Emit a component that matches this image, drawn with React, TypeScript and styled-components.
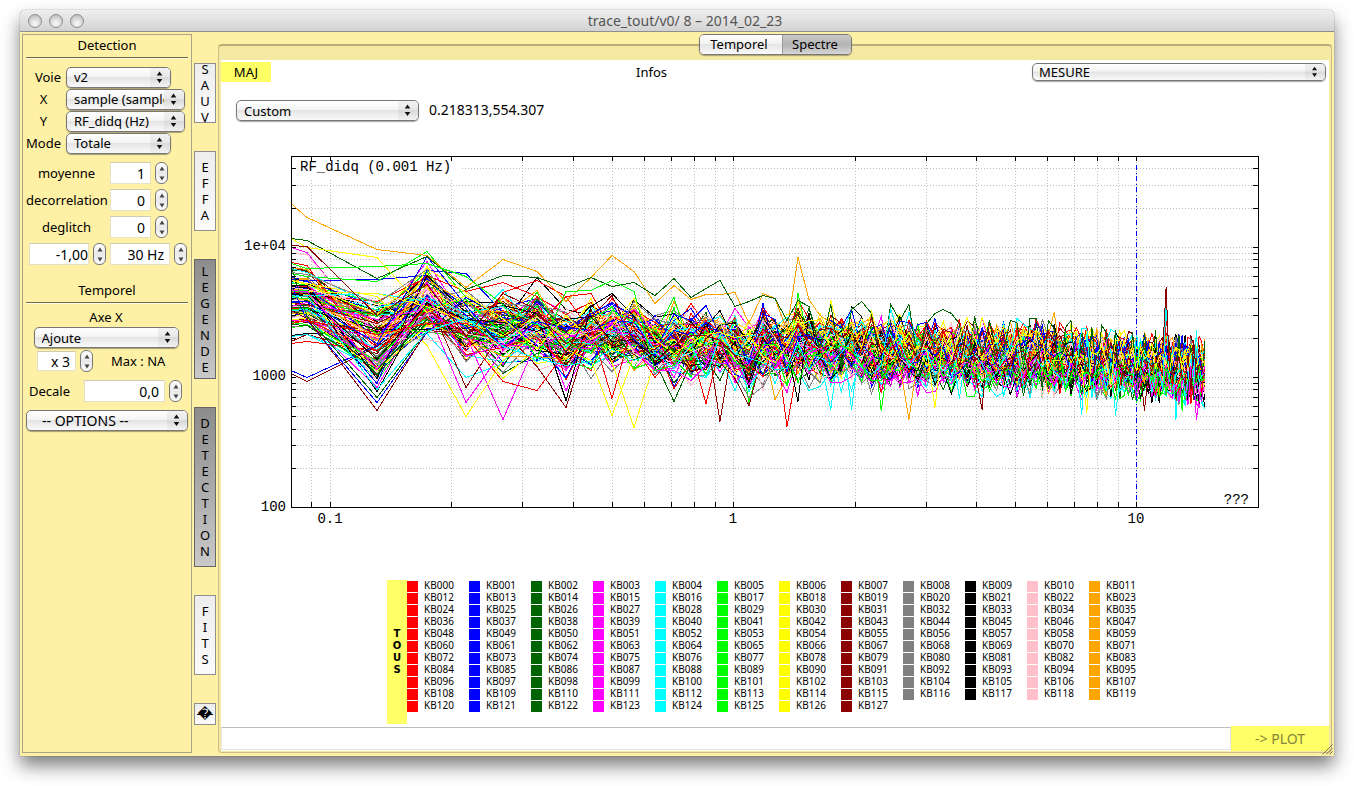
import React from "react";
import styled, { createGlobalStyle, css } from "styled-components";

const GlobalStyle = createGlobalStyle`
  * { box-sizing: border-box; }
  body {
    margin: 0;
    background: #fff;
    color: #000;
    font: 13px/16px "Lucida Grande", "Noto Sans", sans-serif;
  }
  button, input, select { font: inherit; color: inherit; margin: 0; }
`;

/* ---------- window ---------- */

const Desktop = styled.div`
  display: flex;
  min-height: 100vh;
  padding: 10px 20px 30px;
`;

const Window = styled.div`
  flex: 1;
  min-width: 0;
  display: flex;
  flex-direction: column;
  border-radius: 5px 5px 0 0;
  background: #fef0a5;
  box-shadow: 0 0 1px rgba(0, 0, 0, 0.7), 0 10px 18px rgba(0, 0, 0, 0.5);
`;

const TitleBar = styled.header`
  display: flex;
  align-items: center;
  height: 22px;
  padding: 0 48px 0 8px;
  border-bottom: 1px solid #8f8f8f;
  border-radius: 5px 5px 0 0;
  background: linear-gradient(#efefef, #d2d2d2);
`;

const Lights = styled.div`
  display: flex;
  gap: 7px;
`;

const Light = styled.button`
  width: 14px;
  height: 14px;
  padding: 0;
  border: 1px solid #8d8d8d;
  border-radius: 50%;
  background: radial-gradient(circle at 50% 70%, #f2f2f2 15%, #c4c4c4 75%);
`;

const Title = styled.h1`
  flex: 1;
  margin: 0;
  color: #555;
  font-size: 14px;
  font-weight: 400;
  text-align: center;
`;

const Body = styled.div`
  flex: 1;
  display: flex;
  padding: 2px 2px 3px;
`;

/* ---------- shared controls ---------- */

const SelectBox = styled.span<{ $w?: string; $h?: number }>`
  display: grid;
  grid-template-columns: minmax(0, 1fr) 20px;
  align-items: stretch;
  width: ${(p) => p.$w ?? "auto"};
  height: ${(p) => p.$h ?? 21}px;
  border: 1px solid #777;
  border-radius: 5px;
  background: linear-gradient(#fff, #f4f4f4 45%, #e4e4e4 50%, #fafafa);
  box-shadow: 0 1px 1px rgba(0, 0, 0, 0.35);
`;

const NativeSelect = styled.select<{ $indent: number; $large?: boolean }>`
  grid-area: 1 / 1 / 2 / 3;
  appearance: none;
  min-width: 0;
  padding: 0 20px 0 ${(p) => p.$indent}px;
  border: 0;
  background: transparent;
  font-size: ${(p) => (p.$large ? 14 : 13)}px;
  line-height: 16px;
`;

const SelectArrows = styled.svg`
  grid-area: 1 / 2;
  width: 20px;
  height: 100%;
  pointer-events: none;
  border-radius: 0 4px 4px 0;
  background: linear-gradient(#f2f2f2, #e8e8e8 45%, #d9d9d9 50%, #f2f2f2);
`;

function Dropdown(props: { label?: string; id?: string; value: string; w?: string; h?: number; indent?: number; large?: boolean }) {
  return (
    <SelectBox $w={props.w} $h={props.h}>
      <NativeSelect
        id={props.id}
        aria-label={props.label}
        $indent={props.indent ?? 7}
        $large={props.large}
        defaultValue={props.value}
      >
        <option>{props.value}</option>
      </NativeSelect>
      <SelectArrows viewBox="0 0 20 18" aria-hidden>
        <path d="M9.5 3 L12.3 7 H6.7 Z M9.5 14.5 L12.3 10.5 H6.7 Z" fill="#111" />
      </SelectArrows>
    </SelectBox>
  );
}

const SpinRow = styled.span`
  display: flex;
  align-items: center;
  gap: 4px;
`;

const SpinInput = styled.input<{ $w: number; $h?: number; $pad?: number }>`
  width: ${(p) => p.$w}px;
  height: ${(p) => p.$h ?? 22}px;
  padding: 1px ${(p) => p.$pad ?? 5}px 0 0;
  border: 1px solid #e6e0c4;
  border-top-color: #cfcab0;
  background: #fff;
  font-size: 14px;
  text-align: right;
`;

const Stepper = styled.span`
  display: flex;
  flex-direction: column;
  width: 13px;
  height: 22px;
  overflow: hidden;
  border: 1px solid #777;
  border-radius: 6px;
  background: linear-gradient(#fff, #e9e9e9 50%, #fafafa);
`;

const StepButton = styled.button`
  flex: 1;
  display: flex;
  align-items: center;
  justify-content: center;
  padding: 0;
  border: 0;
  background: transparent;
`;

function Spin(props: { label?: string; id?: string; value: string; w: number; h?: number; pad?: number }) {
  return (
    <SpinRow>
      <SpinInput id={props.id} aria-label={props.label} defaultValue={props.value} $w={props.w} $h={props.h} $pad={props.pad} />
      <Stepper>
        <StepButton aria-label="plus">
          <svg width="6" height="5" viewBox="0 0 6 5"><path d="M3 0.5 L5.5 4.5 H0.5 Z" fill="#444" /></svg>
        </StepButton>
        <StepButton aria-label="moins">
          <svg width="6" height="5" viewBox="0 0 6 5"><path d="M3 4.5 L5.5 0.5 H0.5 Z" fill="#444" /></svg>
        </StepButton>
      </Stepper>
    </SpinRow>
  );
}

/* ---------- left panel ---------- */

const Sidebar = styled.aside`
  width: 170px;
  flex: none;
  padding: 3px;
  border: 1px solid #aaa588;
`;

const Heading = styled.h2`
  height: 20px;
  margin: 0;
  border-bottom: 1px solid #6f6a4c;
  box-shadow: 0 1px 0 #fffbe0;
  font-size: 13px;
  font-weight: 400;
  line-height: 14px;
  text-align: center;
`;

const ChannelForm = styled.div`
  display: grid;
  grid-template-columns: 35px 119px;
  grid-auto-rows: 22px;
  column-gap: 5px;
  align-items: center;
  padding-top: 8px;
`;

const Label = styled.label<{ $align?: string }>`
  text-align: ${(p) => p.$align ?? "center"};
  white-space: nowrap;
`;

const FilterForm = styled.div`
  display: grid;
  grid-template-columns: 81px 60px;
  grid-auto-rows: 22px;
  gap: 5px 3px;
  align-items: center;
  padding-top: 8px;
`;

const BandRow = styled.div`
  display: flex;
  gap: 4px;
  padding: 5px 0 18px 3px;
`;

const AxisBlock = styled.div`
  display: flex;
  flex-direction: column;
  align-items: center;
  padding: 6px 2px 0 0;
`;

const AxisTitle = styled.span`
  height: 18px;
  line-height: 16px;
`;

const ScaleRow = styled.div`
  display: flex;
  align-items: center;
  gap: 18px;
  padding: 2px 0 8px 11px;
`;

const OffsetRow = styled.div`
  display: flex;
  align-items: center;
  gap: 14px;
  padding: 0 0 8px 3px;
`;

function LeftPanel() {
  return (
    <Sidebar>
      <Heading>Detection</Heading>
      <ChannelForm>
        <Label htmlFor="voie" $align="right">Voie</Label>
        <Dropdown id="voie" value="v2" w="105px" />
        <Label htmlFor="axe-x">X</Label>
        <Dropdown id="axe-x" value="sample (sample)" />
        <Label htmlFor="axe-y">Y</Label>
        <Dropdown id="axe-y" value="RF_didq (Hz)" />
        <Label htmlFor="mode">Mode</Label>
        <Dropdown id="mode" value="Totale" w="105px" />
      </ChannelForm>
      <FilterForm>
        <Label htmlFor="moyenne">moyenne</Label>
        <Spin id="moyenne" value="1" w={41} />
        <Label htmlFor="decorrelation">decorrelation</Label>
        <Spin id="decorrelation" value="0" w={41} />
        <Label htmlFor="deglitch">deglitch</Label>
        <Spin id="deglitch" value="0" w={41} />
      </FilterForm>
      <BandRow>
        <Spin label="Fréquence basse" value="-1,00" w={60} pad={0} />
        <Spin label="Fréquence haute" value="30 Hz" w={60} />
      </BandRow>
      <Heading>Temporel</Heading>
      <AxisBlock>
        <AxisTitle>Axe X</AxisTitle>
        <Dropdown label="Axe X" value="Ajoute" w="145px" />
      </AxisBlock>
      <ScaleRow>
        <Spin label="Echelle" value="x 3" w={39} h={20} />
        <span>Max : NA</span>
      </ScaleRow>
      <OffsetRow>
        <Label htmlFor="decale">Decale</Label>
        <Spin id="decale" value="0,0" w={81} />
      </OffsetRow>
      <Dropdown label="Options" value="-- OPTIONS --" indent={15} large />
    </Sidebar>
  );
}

/* ---------- vertical tool strip ---------- */

const Strip = styled.nav`
  display: flex;
  flex-direction: column;
  gap: 28px;
  flex: none;
  width: 26px;
  padding: 29px 2px 0;
`;

const StripButton = styled.button<{ $h: number; $on?: boolean }>`
  display: flex;
  flex-direction: column;
  align-items: center;
  justify-content: center;
  flex: none;
  width: 22px;
  height: ${(p) => p.$h}px;
  padding: 0;
  overflow: hidden;
  border: 1px solid #8f8f8f;
  background: linear-gradient(#ededed, #fbfbfb);
  line-height: 16px;
  ${(p) =>
    p.$on &&
    css`
      border-color: #666;
      background: linear-gradient(#8c8c8c, #c9c9c9);
    `}
`;

const Replacement = styled.span`
  width: 16px;
  background: linear-gradient(#000, #000) center 8px / 16px 1px no-repeat;
  font-family: "DejaVu Sans", sans-serif;
  font-size: 14px;
  line-height: 16px;
`;

const TOOLS = [
  { name: "SAUV", h: 60, on: false },
  { name: "EFFA", h: 80, on: false },
  { name: "LEGENDE", h: 120, on: true },
  { name: "DETECTION", h: 160, on: true },
  { name: "FITS", h: 80, on: false },
];

function Letters({ text }: { text: string }) {
  return (
    <>
      {text.split("").map((c, i) => (
        <span key={i}>{c}</span>
      ))}
    </>
  );
}

function ToolStrip() {
  return (
    <Strip>
      {TOOLS.map((t) => (
        <StripButton key={t.name} $h={t.h} $on={t.on} aria-label={t.name}>
          <Letters text={t.name} />
        </StripButton>
      ))}
      <StripButton $h={22} aria-label="Aide">
        <Replacement>{"\uFFFD"}</Replacement>
      </StripButton>
    </Strip>
  );
}

/* ---------- spectrum ---------- */

const COLORS = ["#ff0000", "#0000ff", "#006400", "#ff00ff", "#00ffff", "#00ff00", "#ffff00", "#8b0000", "#808080", "#000000", "#ffc0cb", "#ffa500"];

const CHANNELS = 128;

/* plot frame inside the drawing */
const LEFT = 70;
const RIGHT = 1037;
const TOP = 16;
const BOTTOM = 367;

const xOf = (f: number) => LEFT + ((Math.log10(f) - Math.log10(0.08)) / Math.log10(20 / 0.08)) * (RIGHT - LEFT);
const yOf = (v: number) => BOTTOM - ((Math.log10(v) - 2) / (Math.log10(5e4) - 2)) * (BOTTOM - TOP);

/* positions of the smoothed frequency bins, closer together as they go up */
const BINS = [70, 86, 156, 206, 245, 282, 316, 345, 370, 391, 413, 434, 453, 470, 485, 499, 514, 528, 542, 554, 566, 577, 588];
while (BINS[BINS.length - 1] < 980) {
  const x = BINS[BINS.length - 1];
  BINS.push(x + 2.5 + (8.5 * (984 - x)) / 396);
}
BINS.push(984);

/* upper and lower limits of the bundle: x, top, bottom */
const BAND = [
  [70, 112, 204], [86, 116, 200], [156, 132, 258], [206, 116, 210], [245, 142, 232], [282, 146, 234], [316, 138, 230],
  [345, 160, 240], [370, 154, 236], [391, 148, 232], [413, 152, 234], [434, 170, 240], [453, 160, 244], [470, 164, 246],
  [485, 162, 240], [499, 168, 238], [514, 166, 246], [528, 178, 258], [542, 162, 246], [554, 172, 240], [566, 176, 248],
  [577, 162, 244], [600, 170, 248], [630, 170, 248], [680, 178, 252], [740, 180, 252], [820, 182, 254], [880, 192, 256],
  [940, 196, 259], [984, 200, 265],
];

function bandAt(x: number) {
  let i = 1;
  while (i < BAND.length - 1 && BAND[i][0] < x) i++;
  const [x0, t0, b0] = BAND[i - 1];
  const [x1, t1, b1] = BAND[i];
  const r = Math.min(1, Math.max(0, (x - x0) / (x1 - x0)));
  return { mid: (t0 + b0 + (t1 + b1 - t0 - b0) * r) / 2, half: (b0 - t0 + (b1 - t1 - b0 + t0) * r) / 2 };
}

/* vertical tendency of each colour inside the bundle, growing to the right */
const TENDENCY = [-0.15, 0, 0.15, 0.2, 0.05, 0.25, -0.2, -0.25, 0, 0.2, -0.1, -0.25];

/* channels that leave the bundle: [channel, x, y, x, y, ...] */
const PEAKS: number[][] = [
  [119, 70, 63, 86, 77, 156, 109, 206, 115, 245, 147, 282, 119, 316, 131, 345, 161, 370, 137, 391, 115, 413, 131, 434, 163, 453, 145, 470, 159, 485, 154, 499, 154, 514, 152, 528, 183, 542, 153, 554, 158, 566, 190, 577, 117, 588, 159, 598, 175, 609, 182],
  [122, 70, 98, 86, 100, 156, 138, 206, 116, 245, 149, 282, 135, 316, 137, 345, 147, 370, 137, 391, 146, 413, 142, 434, 155, 453, 138, 470, 157, 485, 148, 499, 140, 514, 166, 528, 161, 542, 155, 554, 158, 566, 180, 577, 160, 588, 166, 609, 164, 629, 169, 639, 161, 651, 173, 665, 164, 675, 180, 689, 164, 704, 183, 711, 173, 719, 184, 726, 169, 734, 173, 740, 183, 750, 184, 757, 176, 770, 180, 787, 180, 799, 182, 809, 178, 817, 178, 825, 180, 834, 188, 847, 187, 852, 180, 859, 190, 869, 187, 879, 185, 887, 192, 896, 190, 910, 192, 924, 193, 936, 190, 949, 205, 959, 195, 970, 205, 983, 201],
  [126, 70, 98, 86, 107, 156, 117, 206, 172],
  [125, 70, 123, 86, 128, 156, 126, 206, 123, 245, 136, 282, 164],
  [127, 70, 105, 86, 106, 156, 175],
  [121, 206, 116, 245, 165],
  [73, 206, 130, 245, 133, 282, 172],
  [97, 70, 230, 86, 237, 156, 205],
  [103, 70, 233, 86, 241, 156, 206],
  [115, 70, 170, 86, 178, 156, 270, 206, 190],
  [109, 86, 180, 156, 262, 206, 192],
  [98, 86, 176, 156, 257],
  [93, 156, 251],
  [125, 345, 151, 370, 150, 391, 140, 413, 151], [60, 345, 156, 370, 153], [96, 282, 152, 316, 140, 345, 156],
  [102, 206, 205, 245, 276, 282, 220],
  [114, 391, 275, 370, 220, 413, 215], [90, 413, 287, 391, 222, 434, 220],
  [111, 245, 262, 282, 210], [99, 245, 195, 282, 279, 316, 200], [91, 245, 247],
  [108, 282, 241, 316, 250], [105, 345, 260], [91, 345, 267], [87, 345, 250],
  [120, 391, 258], [74, 453, 261], [96, 485, 263], [79, 499, 281], [84, 566, 286], [117, 577, 261], [67, 528, 265],
  [107, 554, 259], [107, 690, 279], [88, 609, 269], [100, 629, 269], [89, 656, 270], [103, 764, 269],
  [77, 577, 153], [66, 577, 160], [78, 609, 160], [70, 609, 163], [124, 665, 168], [112, 689, 172], [95, 833, 172],
  [124, 860, 188, 868, 188, 914, 192, 976, 190], [112, 955, 279, 862, 274, 896, 275, 742, 258, 784, 256],
  [123, 976, 279], [126, 712, 267, 866, 272], [101, 962, 270], [91, 924, 270],
  [127, 945, 147], [124, 945, 158], [120, 945, 175], [119, 945, 195],
];

function buildTraces() {
  let seed = 20140223;
  const rand = () => {
    seed = (seed * 1664525 + 1013904223) % 4294967296;
    return seed / 4294967296;
  };
  const gauss = () => (rand() + rand() + rand() + rand() - 2) * 1.1;
  const traces: number[][] = [];
  for (let c = 0; c < CHANNELS; c++) {
    const own = gauss() * 0.3;
    let noise = gauss();
    traces.push(
      BINS.map((x, i) => {
        const { mid, half } = bandAt(x);
        noise = i === 1 ? noise + gauss() * 0.1 : gauss();
        const lean = TENDENCY[c % 12] * (0.2 + (0.8 * (x - LEFT)) / 914);
        const v = Math.max(-1.1, Math.min(1.1, own + lean + noise * 0.54));
        return Math.round(mid + half * v) + 0.5;
      })
    );
  }
  for (const [channel, ...pts] of PEAKS) {
    for (let i = 0; i < pts.length; i += 2) {
      let best = 0;
      BINS.forEach((x, j) => {
        if (Math.abs(x - pts[i]) < Math.abs(BINS[best] - pts[i])) best = j;
      });
      traces[channel][best] = pts[i + 1] + 0.5;
    }
  }
  return traces.map((ys) => "M" + ys.map((y, i) => `${BINS[i].toFixed(1)} ${y}`).join("L"));
}

const TRACES = buildTraces();

const MINOR = [1, 2, 3, 4, 5, 6, 7, 8, 9];
const X_TICKS = [0.09, ...MINOR.map((m) => m / 10), ...MINOR, 10];
const Y_TICKS = [...MINOR.map((m) => m * 100).slice(1), ...MINOR.map((m) => m * 1000), 1e4, 2e4, 3e4, 4e4];
const snap = (n: number) => Math.floor(n + 0.3) + 0.5;

const Plot = styled.svg`
  display: block;
  width: 100%;
  height: auto;
  font-family: "Liberation Mono", monospace;
  font-size: 14px;
`;

function Spectrum() {
  return (
    <Plot viewBox="0 0 1108 400" role="img" aria-label="Spectre RF_didq">
      <g shapeRendering="crispEdges" fill="none" strokeWidth="1">
        <g stroke="#bdbdbd" strokeDasharray="1 2">
          {X_TICKS.map((f) => <path key={f} d={`M${snap(xOf(f))} ${TOP} V${BOTTOM}`} />)}
          {Y_TICKS.map((v) => <path key={v} d={`M${LEFT} ${snap(yOf(v))} H${RIGHT}`} />)}
        </g>
        <rect x={LEFT + 5} y={TOP + 4} width="164" height="18" fill="#fff" />
        {TRACES.map((d, c) => <path key={c} d={d} stroke={COLORS[c % 12]} />)}
        <path d={`M${snap(xOf(10))} 25 V361`} stroke="#0000ff" strokeDasharray="5 3 1 2" />
        <g stroke="#000">
          {X_TICKS.map((f) => <path key={f} d={`M${snap(xOf(f))} ${TOP} v5 M${snap(xOf(f))} ${BOTTOM} v-5`} />)}
          {Y_TICKS.map((v) => <path key={v} d={`M${LEFT} ${snap(yOf(v))} h5 M${RIGHT} ${snap(yOf(v))} h-5`} />)}
          <rect x={LEFT + 0.5} y={TOP + 0.5} width={RIGHT - LEFT} height={BOTTOM - TOP} />
        </g>
      </g>
      <text x="79" y="31">RF_didq (0.001 Hz)</text>
      <text x="1028" y="364" textAnchor="end">???</text>
      <g textAnchor="end">
        <text x="65" y="110">1e+04</text>
        <text x="65" y="240">1000</text>
        <text x="65" y="371">100</text>
      </g>
      <g textAnchor="middle">
        <text x="109" y="383">0.1</text>
        <text x="512" y="383">1</text>
        <text x="915" y="383">10</text>
      </g>
    </Plot>
  );
}

/* ---------- legend ---------- */

const LegendBox = styled.div`
  display: flex;
  justify-content: center;
  padding: 40px 12px 0 0;
  font-size: 10px;
  line-height: 12px;
`;

const AllButton = styled.button`
  display: flex;
  flex-direction: column;
  align-items: center;
  justify-content: center;
  width: 20px;
  height: 144px;
  padding: 0;
  border: 0;
  background: #ffff66;
  font-family: "DejaVu Sans", sans-serif;
  font-size: 10px;
  font-weight: 700;
  line-height: 12px;
`;

const LegendGrid = styled.ul`
  display: grid;
  grid-template-columns: repeat(12, 62px);
  grid-auto-rows: 12px;
  margin: 0;
  padding: 0;
  list-style: none;
`;

const LegendItem = styled.li`
  display: flex;
  gap: 6px;
  line-height: 10px;
`;

const Swatch = styled.span<{ $color: string }>`
  width: 11px;
  height: 11px;
  margin-top: 1px;
  background: ${(p) => p.$color};
`;

function Legend() {
  return (
    <LegendBox>
      <AllButton aria-label="TOUS">
        <Letters text="TOUS" />
      </AllButton>
      <LegendGrid>
        {Array.from({ length: CHANNELS }, (_, c) => (
          <LegendItem key={c}>
            <Swatch $color={COLORS[c % 12]} />
            {"KB" + String(c).padStart(3, "0")}
          </LegendItem>
        ))}
      </LegendGrid>
    </LegendBox>
  );
}

/* ---------- right side ---------- */

const Main = styled.main`
  flex: 1;
  min-width: 0;
  display: flex;
  flex-direction: column;
`;

const Tabs = styled.div`
  z-index: 1;
  display: flex;
  align-self: center;
  height: 21px;
  border: 1px solid #777;
  border-radius: 5px;
  overflow: hidden;
  box-shadow: 0 1px 1px rgba(0, 0, 0, 0.3);
`;

const Tab = styled.button<{ $on?: boolean }>`
  width: ${(p) => (p.$on ? 69 : 82)}px;
  padding: 0 3px 2px 0;
  border: 0;
  border-left: ${(p) => (p.$on ? "1px solid #999" : "0")};
  background: ${(p) =>
    p.$on ? "linear-gradient(#c9c9c9, #b4b4b4 50%, #d6d6d6)" : "linear-gradient(#fff, #f2f2f2 45%, #e4e4e4 50%, #fafafa)"};
`;

const Panel = styled.section`
  flex: 1;
  display: flex;
  flex-direction: column;
  margin-top: -11px;
  padding: 14px 2px 1px;
  border: 1px solid #c9bd84;
  border-top: 2px solid #b9ae78;
  border-radius: 4px;
  background: #f5e8a2;
`;

const Sheet = styled.div`
  flex: 1;
  display: flex;
  flex-direction: column;
  padding-top: 2px;
  background: #fff;
`;

const InfoRow = styled.div`
  display: flex;
  align-items: center;
  height: 20px;
  padding-right: 3px;
`;

const YellowButton = styled.button<{ $w: number; $large?: boolean }>`
  align-self: stretch;
  width: ${(p) => p.$w}px;
  padding: 0;
  border: 0;
  background: #ffff66;
  font-size: ${(p) => (p.$large ? 14 : 13)}px;

  &:disabled { color: #85853a; }
`;

const InfoText = styled.span`
  flex: 1;
  text-align: center;
`;

const CursorRow = styled.div`
  display: flex;
  align-items: center;
  gap: 10px;
  padding: 18px 15px 19px;
`;

const CursorText = styled.output`
  padding-bottom: 2px;
  font-size: 14px;
`;

const CommandRow = styled.div`
  display: flex;
  height: 25px;
  margin-top: auto;
`;

const Command = styled.input`
  flex: 1;
  min-width: 0;
  height: 23px;
  margin-top: 1px;
  padding: 0 4px;
  border: 1px solid #e4e4e4;
  border-top: 1px solid #bdbdbd;
  background: #fff;
`;

const Grip = styled.svg`
  position: absolute;
  right: 21px;
  bottom: 31px;
`;

const Frame = styled.div`
  position: relative;
`;

export default function App() {
  return (
    <Frame>
      <GlobalStyle />
      <Desktop>
        <Window>
          <TitleBar>
            <Lights>
              <Light aria-label="Fermer" />
              <Light aria-label="Réduire" />
              <Light aria-label="Agrandir" />
            </Lights>
            <Title>trace_tout/v0/ 8 – 2014_02_23</Title>
          </TitleBar>
          <Body>
            <LeftPanel />
            <ToolStrip />
            <Main>
              <Tabs role="tablist">
                <Tab role="tab">Temporel</Tab>
                <Tab role="tab" $on aria-selected>Spectre</Tab>
              </Tabs>
              <Panel>
                <Sheet>
                  <InfoRow>
                    <YellowButton $w={50}>MAJ</YellowButton>
                    <InfoText>Infos</InfoText>
                    <Dropdown label="Mesure" value="MESURE" w="294px" h={18} indent={6} />
                  </InfoRow>
                  <CursorRow>
                    <Dropdown label="Echelle des axes" value="Custom" w="183px" />
                    <CursorText>0.218313,554.307</CursorText>
                  </CursorRow>
                  <Spectrum />
                  <Legend />
                  <CommandRow>
                    <Command aria-label="Commande" />
                    <YellowButton $w={98} $large disabled>{"-> PLOT"}</YellowButton>
                  </CommandRow>
                </Sheet>
              </Panel>
            </Main>
          </Body>
        </Window>
      </Desktop>
      <Grip width="11" height="11" viewBox="0 0 11 11" aria-hidden>
        <path d="M0.5 10.5 L10.5 0.5 M4 10.5 L10.5 4 M7.5 10.5 L10.5 7.5" stroke="#77714f" fill="none" />
      </Grip>
    </Frame>
  );
}
